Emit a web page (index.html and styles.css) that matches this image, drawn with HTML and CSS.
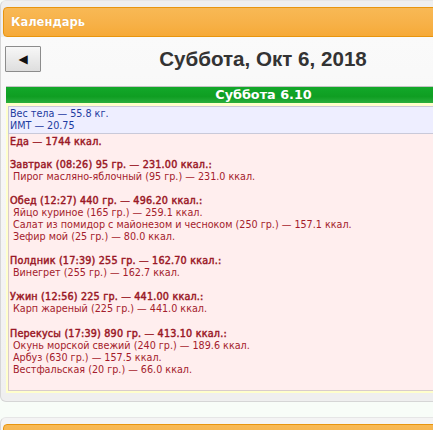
FILE: index.html
```html
<!DOCTYPE html>
<html lang="ru">
<head>
<meta charset="utf-8">
<title>Календарь</title>
<link rel="stylesheet" href="styles.css">
</head>
<body>
<div class="panel">
  <div class="panel-head">Календарь</div>
  <div class="cal">
    <div class="cal-nav">
      <button class="prev" type="button">&#9664;</button>
      <div class="cal-title">Суббота, Окт 6, 2018</div>
    </div>
    <div class="day">
      <div class="day-head">Суббота 6.10</div>
      <div class="day-body">
        <div class="body-box">
          <div>Вес тела — 55.8 кг.</div>
          <div>ИМТ — 20.75</div>
        </div>
        <div class="food-box">
          <div class="total">Еда — 1744 ккал.</div>
          <div class="meal first">
            <div class="meal-title">Завтрак (08:26) 95 гр. — 231.00 ккал.:</div>
            <div class="item">Пирог масляно-яблочный (95 гр.) — 231.0 ккал.</div>
          </div>
          <div class="meal">
            <div class="meal-title">Обед (12:27) 440 гр. — 496.20 ккал.:</div>
            <div class="item">Яйцо куриное (165 гр.) — 259.1 ккал.</div>
            <div class="item">Салат из помидор с майонезом и чесноком (250 гр.) — 157.1 ккал.</div>
            <div class="item">Зефир мой (25 гр.) — 80.0 ккал.</div>
          </div>
          <div class="meal">
            <div class="meal-title">Полдник (17:39) 255 гр. — 162.70 ккал.:</div>
            <div class="item">Винегрет (255 гр.) — 162.7 ккал.</div>
          </div>
          <div class="meal">
            <div class="meal-title">Ужин (12:56) 225 гр. — 441.00 ккал.:</div>
            <div class="item">Карп жареный (225 гр.) — 441.0 ккал.</div>
          </div>
          <div class="meal">
            <div class="meal-title">Перекусы (17:39) 890 гр. — 413.10 ккал.:</div>
            <div class="item">Окунь морской свежий (240 гр.) — 189.6 ккал.</div>
            <div class="item">Арбуз (630 гр.) — 157.5 ккал.</div>
            <div class="item">Вестфальская (20 гр.) — 66.0 ккал.</div>
          </div>
        </div>
      </div>
    </div>
  </div>
</div>
<div class="panel next">
  <div class="panel-head">Настройки</div>
</div>
</body>
</html>
```

FILE: styles.css
```css
html, body {
  margin: 0;
  padding: 0;
}
body {
  background: #f8fdf8;
  font-family: "DejaVu Sans Condensed", "DejaVu Sans", Verdana, sans-serif;
  font-size: 10.7px;
  width: 433px;
  overflow: hidden;
}
.panel {
  width: 522px;
  box-sizing: border-box;
  border: 1px solid #d6d6d6;
  border-top-color: #e6e6e6;
  border-radius: 6px;
  background: #efefef;
  padding: 6px 2px 8px 2px;
}
.panel.next {
  margin-top: 15px;
  background: #f4f4f4;
}
.panel-head {
  height: 28px;
  line-height: 27px;
  border: 1px solid #e8950e;
  border-radius: 4px;
  background: linear-gradient(#f8b955 0%, #f7b148 55%, #f6aa38 100%);
  color: #fff;
  font-family: "DejaVu Sans Condensed", "DejaVu Sans", Verdana, sans-serif;
  font-weight: bold;
  font-size: 12.8px;
  padding-left: 7px;
  text-shadow: 0 0 1px rgba(160, 90, 0, 0.35);
}
.cal {
  background: linear-gradient(#fafafa 0%, #f0f0f0 100%);
  margin: 0 -2px;
  padding: 9px 0 0 0;
}
.cal-nav {
  display: grid;
  grid-template-columns: 36px 1fr 36px;
  align-items: center;
  height: 26px;
  padding: 0 0 0 4px;
}
.prev {
  width: 36px;
  height: 26px;
  margin: 0;
  padding: 0;
  border: 1px solid #8c8c8c;
  border-radius: 1px;
  background: linear-gradient(#f7f7f7, #dedede);
  font-size: 12px;
  color: #111;
  line-height: 24px;
  font-family: "DejaVu Sans", sans-serif;
}
.cal-title {
  text-align: center;
  font-family: "Liberation Sans", Arial, sans-serif;
  font-weight: bold;
  font-size: 20.6px;
  color: #333;
}
.day {
  margin: 14px 0 0 5px;
}
.day-head {
  height: 16px;
  line-height: 16px;
  border-top: 1px solid #c4c4c4;
  background: linear-gradient(#13a82a 0%, #0f9e22 60%, #2aae3c 100%);
  color: #fff;
  font-family: "DejaVu Sans", Verdana, sans-serif;
  font-weight: bold;
  font-size: 12.8px;
  text-align: center;
}
.day-body {
  border: 2px solid #ffffcc;
  border-right: none;
  border-top-width: 3px;
  background: #ffffcc;
}
.body-box {
  background: #eeeeff;
  border: 1px solid #c9c9d9;
  border-right: none;
  color: #1d3ba0;
  line-height: 12px;
  padding: 1px 0 1px 1px;
}
.food-box {
  background: #ffeeee;
  border: 1px solid #d9cccc;
  border-top: none;
  border-right: none;
  color: #a41c2c;
  line-height: 12px;
  padding: 2px 0 14px 1px;
}
.total, .meal-title {
  color: #9a1826;
  -webkit-text-stroke: 0.45px #9a1826;
  letter-spacing: 0.2px;
}
.meal {
  margin-top: 12px;
}
.meal.first {
  margin-top: 11px;
}
.meal:last-child {
  margin-top: 13px;
}
.item {
  padding-left: 3px;
}
```
